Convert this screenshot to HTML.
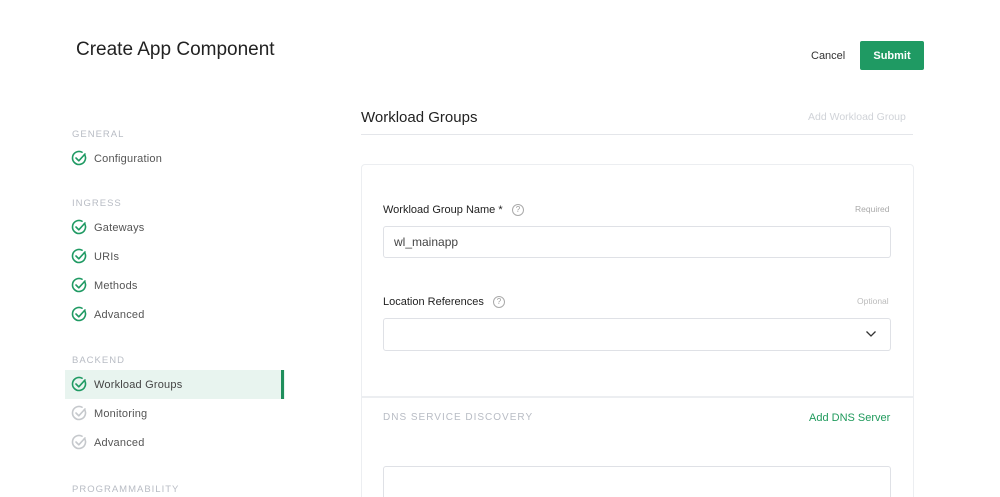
<!DOCTYPE html>
<html style="width:1000px;height:497px;overflow:hidden"><head><style>
*{margin:0;padding:0;box-sizing:border-box}
body{width:1000px;height:497px;overflow:hidden;background:#fff;font-family:"Liberation Sans",sans-serif;position:relative;color:#333}
.a{position:absolute;white-space:nowrap}
.sec{font-size:9.5px;letter-spacing:1px;color:#b8bcc4}
.item{font-size:11px;color:#555;letter-spacing:.2px}
.ic{position:absolute}
.lbl{font-size:11px;color:#222}
.q{position:absolute;width:12px;height:12px;border:1px solid #aaa;border-radius:50%;font-size:8px;color:#999;text-align:center;line-height:10px}
.inp{position:absolute;border:1.5px solid #dfe1e6;border-radius:3px;background:#fff}
</style></head><body>
<div class="a" style="left:76px;top:39px;font-size:19px;color:#222;letter-spacing:0">Create App Component</div>
<div class="a" style="left:811px;top:50px;font-size:11px;color:#333">Cancel</div>
<div class="a" style="left:860px;top:41px;width:64px;height:29px;background:#1f9a63;border-radius:2px;color:#fff;font-size:11px;font-weight:bold;text-align:center;line-height:30px">Submit</div>

<div class="a sec" style="left:72px;top:129px">GENERAL</div>
<div class="a sec" style="left:72px;top:198px">INGRESS</div>
<div class="a sec" style="left:72px;top:355px">BACKEND</div>
<div class="a sec" style="left:72px;top:484px">PROGRAMMABILITY</div>
<div class="a" style="left:65px;top:370px;width:220px;height:29px;background:#e8f4ef"></div>
<div class="a" style="left:281px;top:370px;width:3px;height:29px;background:#1f8f5c"></div>

<svg class="ic" width="300" height="497" style="left:0;top:0">
<defs><g id="ck" fill="none" stroke-width="1.6" stroke-linecap="round" stroke-linejoin="round"><path d="M12.5 3.5A6.5 6.5 0 1 1 10 1.2"/><path d="M4 7l2.8 2.8L13 3"/></g></defs>
<use href="#ck" x="72" y="151" stroke="#1f9a63"/>
<use href="#ck" x="72" y="220" stroke="#1f9a63"/>
<use href="#ck" x="72" y="249" stroke="#1f9a63"/>
<use href="#ck" x="72" y="278" stroke="#1f9a63"/>
<use href="#ck" x="72" y="307" stroke="#1f9a63"/>
<use href="#ck" x="72" y="377" stroke="#1f9a63"/>
<use href="#ck" x="72" y="406" stroke="#c5c8cc"/>
<use href="#ck" x="72" y="435" stroke="#c5c8cc"/>
</svg>
<div class="a item" style="left:94px;top:153px">Configuration</div>
<div class="a item" style="left:94px;top:222px">Gateways</div>
<div class="a item" style="left:94px;top:251px">URIs</div>
<div class="a item" style="left:94px;top:280px">Methods</div>
<div class="a item" style="left:94px;top:309px">Advanced</div>
<div class="a item" style="left:94px;top:379px;color:#444">Workload Groups</div>
<div class="a item" style="left:94px;top:408px">Monitoring</div>
<div class="a item" style="left:94px;top:437px">Advanced</div>

<div class="a" style="left:361px;top:109px;font-size:15px;color:#222">Workload Groups</div>
<div class="a" style="left:808px;top:111px;font-size:10.5px;color:#d0d3d8">Add Workload Group</div>
<div class="a" style="left:361px;top:134px;width:552px;height:1px;background:#e4e6ea"></div>

<div class="a" style="left:361px;top:164px;width:553px;height:340px;border:1.5px solid #eceef1;border-radius:4px"></div>
<div class="a" style="left:362px;top:396px;width:551px;height:2px;background:#eceef1"></div>

<div class="a lbl" style="left:383px;top:204px">Workload Group Name *</div>
<div class="q" style="left:512px;top:204px">?</div>
<div class="a" style="left:855px;top:204px;font-size:8.5px;color:#aaa">Required</div>
<div class="inp" style="left:383px;top:226px;width:508px;height:32px"></div>
<div class="a" style="left:394px;top:235px;font-size:12px;color:#444">wl_mainapp</div>

<div class="a lbl" style="left:383px;top:296px">Location References</div>
<div class="q" style="left:493px;top:296px">?</div>
<div class="a" style="left:857px;top:296px;font-size:8.5px;color:#bbb">Optional</div>
<div class="inp" style="left:383px;top:318px;width:508px;height:33px"></div>
<svg class="ic" style="left:865px;top:330px" width="12" height="8"><path d="M1.5 1.5l4.5 4.5 4.5-4.5" fill="none" stroke="#333" stroke-width="1.3"/></svg>

<div class="a sec" style="left:383px;top:412px;font-size:10px">DNS SERVICE DISCOVERY</div>
<div class="a" style="left:809px;top:412px;font-size:11px;color:#1f9a5c">Add DNS Server</div>
<div class="inp" style="left:383px;top:466px;width:508px;height:40px"></div>
</body></html>
